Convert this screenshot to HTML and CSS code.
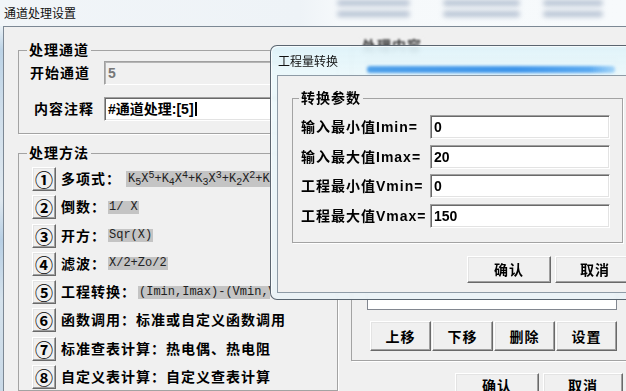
FILE: index.html
```html
<!DOCTYPE html>
<html lang="zh-CN">
<head>
<meta charset="utf-8">
<title>通道处理设置</title>
<link rel="stylesheet" href="styles.css">
</head>
<body>
<div class="screen">
  <header class="titlebar">
    <span class="title">通道处理设置</span>
    <div class="ghost">
      <div class="ghost-row"><i></i><i></i><i></i></div>
      <div class="ghost-row"><i></i><i></i><i></i></div>
    </div>
  </header>

  <main class="client">
    <div class="col-left">
      <fieldset class="group g-channel">
        <legend>处理通道</legend>
        <div class="rows rows-channel">
          <div class="field-row"><span class="lbl">开始通道</span><div class="edit disabled">5</div></div>
          <div class="field-row"><span class="lbl lbl-ind">内容注释</span><div class="edit">#通道处理:[5]<span class="caret"></span></div></div>
        </div>
      </fieldset>

      <fieldset class="group g-method">
        <legend>处理方法</legend>
        <ul class="methods">
          <li><button class="btn num">①</button><span class="m-lbl">多项式：</span><span class="formula f-wide">K<sub>5</sub>X<sup>5</sup>+K<sub>4</sub>X<sup>4</sup>+K<sub>3</sub>X<sup>3</sup>+K<sub>2</sub>X<sup>2</sup>+K<sub>1</sub>X+K<sub>0</sub></span></li>
          <li><button class="btn num">②</button><span class="m-lbl">倒数：</span><span class="formula">1/ X</span></li>
          <li><button class="btn num">③</button><span class="m-lbl">开方：</span><span class="formula">Sqr(X)</span></li>
          <li><button class="btn num">④</button><span class="m-lbl">滤波：</span><span class="formula">X/2+Zo/2</span></li>
          <li><button class="btn num">⑤</button><span class="m-lbl">工程转换：</span><span class="formula">(Imin,Imax)-(Vmin,Vmax)</span></li>
          <li><button class="btn num">⑥</button><span class="m-lbl">函数调用：标准或自定义函数调用</span></li>
          <li><button class="btn num">⑦</button><span class="m-lbl">标准查表计算：热电偶、热电阻</span></li>
          <li><button class="btn num">⑧</button><span class="m-lbl">自定义表计算：自定义查表计算</span></li>
        </ul>
      </fieldset>
    </div>

    <div class="col-right">
      <fieldset class="group g-content">
        <legend class="soft">处理内容</legend>
        <div class="listbox"></div>
        <div class="order-btns">
          <button class="btn">上移</button>
          <button class="btn">下移</button>
          <button class="btn">删除</button>
          <button class="btn">设置</button>
        </div>
      </fieldset>
      <div class="actions main-actions">
        <button class="btn w-ok">确认</button>
        <button class="btn w-cancel">取消</button>
      </div>
    </div>
  </main>

  <section class="dialog">
    <div class="dlg-title"><span class="dlg-caption">工程量转换</span><i class="glow"></i></div>
    <div class="dlg-client">
      <fieldset class="group g-params">
        <legend>转换参数</legend>
        <div class="rows rows-params">
          <div class="field-row"><span class="lbl p-lbl">输入最小值Imin=</span><div class="edit p-edit">0</div></div>
          <div class="field-row"><span class="lbl p-lbl">输入最大值Imax=</span><div class="edit p-edit">20</div></div>
          <div class="field-row"><span class="lbl p-lbl">工程最小值Vmin=</span><div class="edit p-edit">0</div></div>
          <div class="field-row"><span class="lbl p-lbl">工程最大值Vmax=</span><div class="edit p-edit">150</div></div>
        </div>
      </fieldset>
      <div class="actions dlg-actions">
        <button class="btn w-ok">确认</button>
        <button class="btn w-cancel">取消</button>
      </div>
    </div>
  </section>
</div>
</body>
</html>
```

FILE: styles.css
```css
* { box-sizing: border-box; }

html, body {
  margin: 0;
  padding: 0;
}

body {
  width: 626px;
  height: 391px;
  overflow: hidden;
  font-family: "Liberation Sans", "Noto Sans CJK SC", sans-serif;
  color: #000;
  background: linear-gradient(180deg, #f2f6f9 0, #eaf1f6 26px, #bcd3e6 50px, #cfdeeb 110px, #dfe8ef 200px, #b7cfe4 240px, #d5e2ec 300px, #c9d9e7 391px);
}

.screen {
  position: relative;
  width: 626px;
  height: 391px;
  overflow: hidden;
  display: flex;
  flex-direction: column;
}

/* ---------- main window title bar ---------- */
.titlebar {
  height: 26px;
  flex: none;
  display: flex;
  align-items: center;
  padding-left: 4px;
  background: linear-gradient(90deg, #f1f5f8 0, #eef3f7 300px, #f6f9fb 340px, #f7fafc 626px);
}

.title {
  font: 12px/16px "Noto Sans CJK SC", sans-serif;
  color: #111;
}

.ghost {
  margin-left: auto;
  width: 291px;
  align-self: stretch;
  display: flex;
  flex-direction: column;
  gap: 4px;
  padding-left: 2px;
}

.ghost-row {
  display: flex;
  height: 7px;
}

.ghost-row i {
  display: block;
  height: 6px;
  background: rgba(85, 110, 150, 0.38);
  filter: blur(2.5px);
  border-radius: 3px;
}

.ghost-row i:nth-child(1) { width: 73px; }
.ghost-row i:nth-child(2) { width: 77px; margin-left: 33px; }
.ghost-row i:nth-child(3) { width: 60px; margin-left: 23px; }

/* ---------- main client area ---------- */
.client {
  flex: 1;
  min-height: 0;
  margin-left: 3px;
  border-top: 1px solid #7c8894;
  border-left: 1px solid #7c8894;
  background: #f0f0f0;
  display: flex;
  gap: 13px;
  padding: 10px 0 0 14px;
}

.col-left {
  width: 320px;
  flex: none;
  margin-top: 4px;
  display: flex;
  flex-direction: column;
  gap: 10px;
}

.col-right {
  width: 282px;
  flex: none;
}

/* ---------- group boxes ---------- */
.group {
  margin: 0;
  min-width: 0;
  border: 1px solid #a3a3a3;
  box-shadow: 1px 1px 0 #fff;
}

.group > legend {
  padding: 0 2px;
  font-size: 14px;
  line-height: 18px;
  font-weight: bold;
  letter-spacing: 1px;
  background: #f0f0f0;
}

.g-channel { padding: 2px 0 12px 11px; }
.g-channel > legend { margin-left: -3px; }

.g-method { padding: 5px 0 0 13px; flex: 1; }
.g-method > legend { margin-left: -5px; }

.g-content { padding: 5px 15px 9px 15px; width: 282px; }
.g-content > legend { margin-left: -7px; }
.soft { filter: blur(1px); color: #333; }

.g-params { padding: 8px 0 14px 8px; width: 331px; }
.g-params > legend { margin-left: -2px; }

.rows {
  display: flex;
  flex-direction: column;
}

.rows-channel { gap: 12px; }
.rows-params { gap: 5.67px; }

.field-row {
  display: flex;
  align-items: center;
  height: 24px;
}

.lbl {
  flex: none;
  width: 74px;
  font-size: 14px;
  line-height: 18px;
  font-weight: bold;
  letter-spacing: 1px;
  white-space: nowrap;
}

.lbl-ind { padding-left: 4px; }

.p-lbl { width: 129px; }

/* ---------- edit boxes ---------- */
.edit {
  flex: none;
  width: 230px;
  height: 24px;
  border: 1px solid;
  border-color: #a0a0a0 #ffffff #ffffff #a0a0a0;
  box-shadow: inset 1px 1px 0 #696969, inset -1px -1px 0 #e3e3e3;
  background: #fff;
  padding: 0 3px;
  font-size: 14px;
  line-height: 22px;
  font-weight: bold;
  white-space: nowrap;
  overflow: hidden;
  display: flex;
  align-items: center;
}

.edit.disabled {
  background: #f0f0f0;
  color: #777;
  box-shadow: inset 1px 1px 0 #b5b5b5;
}

.p-edit { width: 180px; }

.caret {
  display: inline-block;
  width: 2px;
  height: 14px;
  margin-left: 1px;
  background: #000;
}

/* ---------- buttons ---------- */
.btn {
  margin: 0;
  padding: 0;
  background: #f0f0f0;
  border: 1px solid;
  border-color: #ffffff #696969 #696969 #ffffff;
  box-shadow: inset -1px -1px 0 #a0a0a0, inset 1px 1px 0 #e3e3e3;
  font-family: "Liberation Sans", "Noto Sans CJK SC", sans-serif;
  font-size: 14px;
  font-weight: bold;
  letter-spacing: 1px;
  color: #000;
}

.num {
  flex: none;
  width: 24px;
  height: 24px;
  font-family: "Noto Sans CJK SC", sans-serif;
  font-size: 18px;
  line-height: 1;
  font-weight: bold;
  letter-spacing: 0;
  display: flex;
  align-items: center;
  justify-content: center;
}

/* ---------- method list ---------- */
.methods {
  list-style: none;
  margin: 0;
  padding: 0;
  display: flex;
  flex-direction: column;
  gap: 4.3px;
}

.methods li {
  display: flex;
  align-items: center;
  height: 24px;
  width: 238px;
  white-space: nowrap;
}

.m-lbl {
  flex: none;
  margin-left: 5px;
  font-size: 14px;
  line-height: 18px;
  font-weight: bold;
  letter-spacing: 1px;
}

.formula {
  flex: 0 1 auto;
  min-width: 0;
  overflow: hidden;
  margin-left: 2px;
  padding: 0 1px;
  background: #c4c4c4;
  font: 12px/13px "Liberation Mono", monospace;
  color: #222;
  white-space: nowrap;
}

.f-wide {
  margin-left: 5px;
  padding: 0 2px;
  line-height: 16px;
}

.formula sub,
.formula sup {
  font-size: 10px;
  line-height: 0;
}

.formula sup { vertical-align: 4px; }
.formula sub { vertical-align: -3px; }

/* ---------- right group ---------- */
.listbox {
  height: 250px;
  border: 1px solid #828790;
  background: #fff;
}

.order-btns {
  display: flex;
  gap: 1px;
  padding-left: 3px;
  margin-top: 11px;
  height: 30px;
}

.order-btns .btn { flex: 1; }

.actions {
  display: flex;
  gap: 4px;
}

.actions .btn { height: 27px; }
.w-ok { width: 84px; }
.w-cancel { width: 80px; }

.main-actions {
  padding-left: 104px;
  margin-top: 12px;
}

.main-actions .btn { padding-bottom: 4px; }

/* ---------- dialog ---------- */
.dialog {
  position: absolute;
  left: 270px;
  top: 45px;
  width: 372px;
  height: 255px;
  border: 1px solid rgba(55, 65, 78, 0.8);
  border-radius: 7px 0 0 7px;
  background: linear-gradient(180deg, rgba(222, 243, 250, 0.9) 0, rgba(236, 249, 252, 0.92) 30px, rgba(234, 242, 246, 0.92) 100%);
  backdrop-filter: blur(2px);
  padding: 0 0 6px 6px;
  display: flex;
  flex-direction: column;
  box-shadow: inset 1px 1px 0 rgba(255, 255, 255, 0.7);
}

.dlg-title {
  height: 29px;
  flex: none;
  display: flex;
  align-items: center;
  padding-left: 1px;
}

.dlg-caption {
  font: 12px/16px "Noto Sans CJK SC", sans-serif;
  color: #111;
}

.glow {
  display: block;
  margin-left: auto;
  margin-right: 26px;
  align-self: flex-end;
  margin-bottom: 2px;
  width: 248px;
  height: 7px;
  background: linear-gradient(90deg, #4d9fe9 0, #3d95ea 60%, #5aa9f0 90%, rgba(120, 190, 245, 0.6) 100%);
  filter: blur(1.5px);
  border-radius: 3px;
}

.dlg-client {
  flex: 1;
  border: 1px solid #8e9ba6;
  background: #f0f0f0;
  padding: 13px 0 0 14px;
}

.dlg-actions {
  padding-left: 175px;
  margin-top: 13px;
}
```
